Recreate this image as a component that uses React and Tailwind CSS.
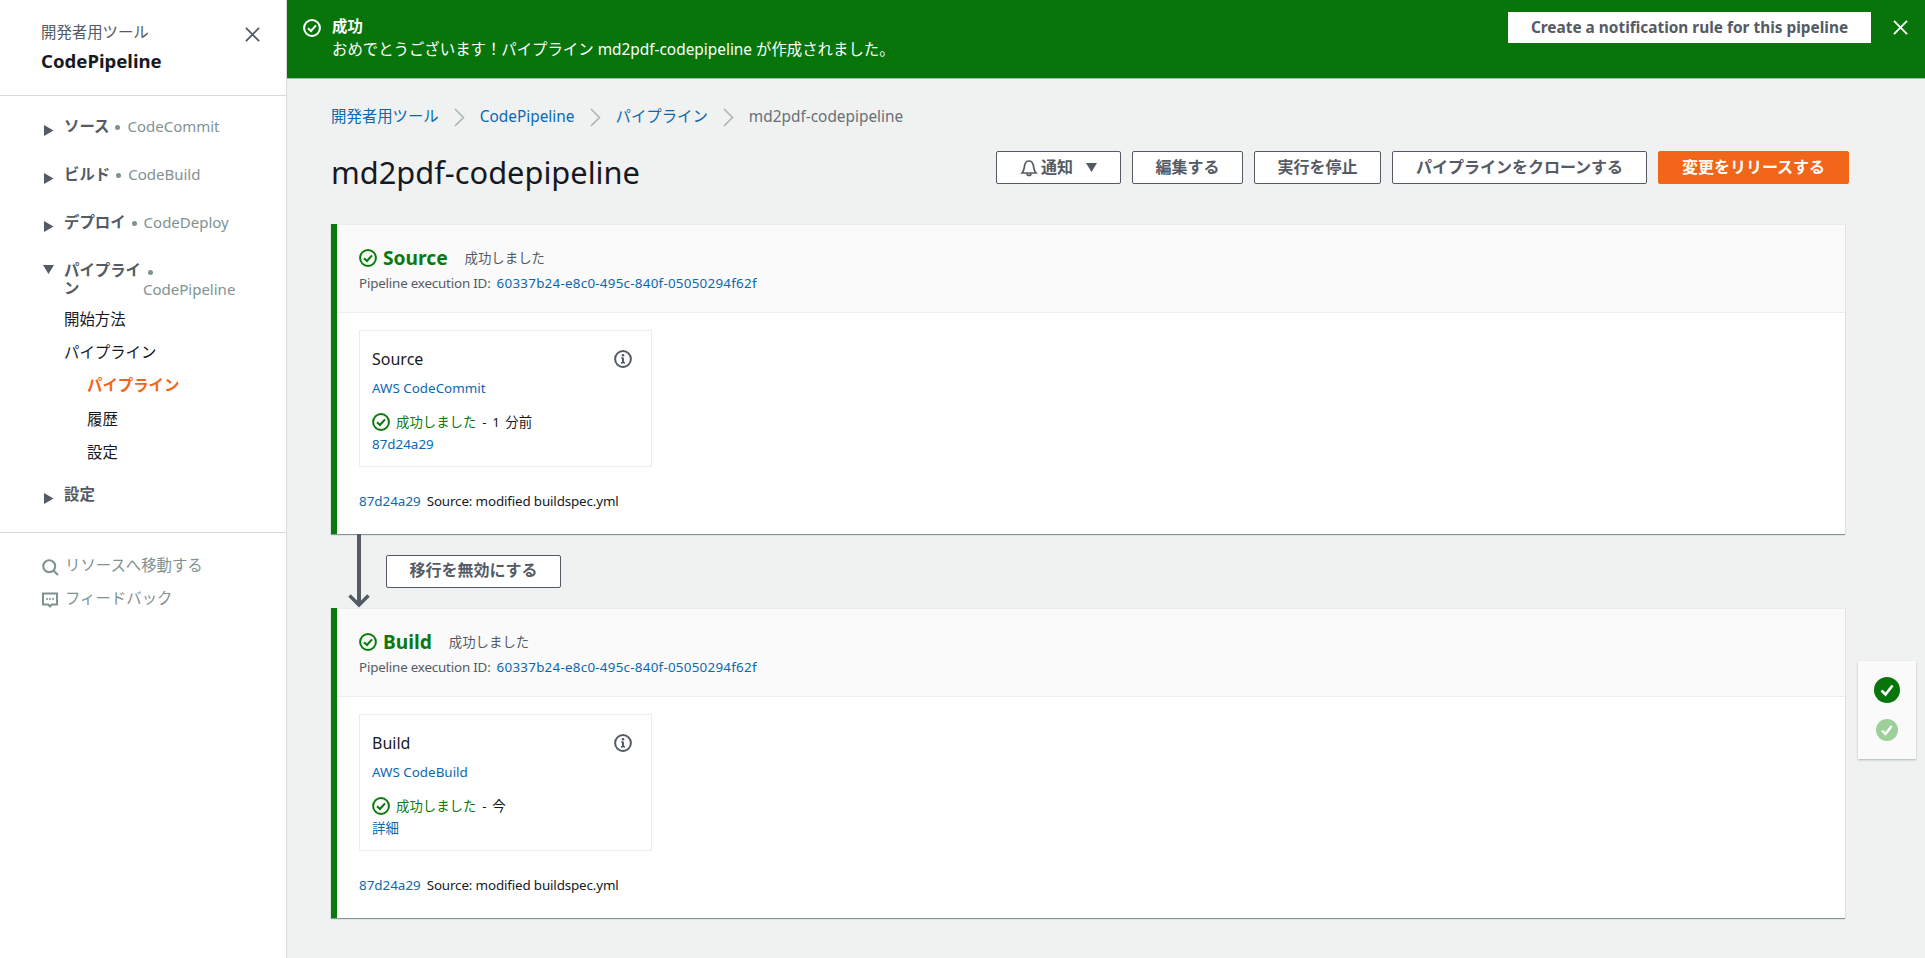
import React from "react";

const sans = '"Noto Sans","Noto Sans CJK JP",sans-serif';

function CheckCircle({ className }) {
  return (
    <svg viewBox="0 0 18 18" className={className} fill="none" stroke="currentColor">
      <circle cx="9" cy="9" r="7.9" strokeWidth="2" />
      <path d="M5 9.2 8 12l5-5.6" strokeWidth="2.1" />
    </svg>
  );
}

function Close({ className }) {
  return (
    <svg viewBox="0 0 16 16" className={className} fill="none" stroke="currentColor" strokeWidth="2">
      <path d="M1 1l14 14M15 1 1 15" />
    </svg>
  );
}

function Tri({ open }) {
  return (
    <svg viewBox="0 0 11 11" className="w-[11px] h-[11px] text-[#545b64] shrink-0" fill="currentColor">
      {open ? <path d="M0 1h11L5.5 10z" /> : <path d="M1 0l9.5 5.5L1 11z" />}
    </svg>
  );
}

function Dot({ className = "" }) {
  return <span className={`inline-block w-[5px] h-[5px] rounded-full bg-[#7f9291] align-[2px] ${className}`} />;
}

function NavHead({ label, sub, className = "" }) {
  return (
    <div className={`flex items-start text-[15.4px] leading-[18px] pl-[43px] ${className}`}>
      <span className="mt-[7px] w-[21px]"><Tri /></span>
      <span className="font-bold text-[#545b64]">{label}</span>
      {sub && (
        <span className="text-[#7f9291] text-[15px] ml-[6px] -mt-[1px]">
          <Dot className="mr-[7px]" />
          {sub}
        </span>
      )}
    </div>
  );
}

function Crumb({ children }) {
  return <a className="text-[#0b68b3]">{children}</a>;
}

function Chevron() {
  return (
    <svg viewBox="0 0 11 19" className="w-[11px] h-[19px] mx-[15px] text-[#aab7b8]" fill="none" stroke="currentColor" strokeWidth="1.6">
      <path d="M1 1l8.5 8.5L1 18" />
    </svg>
  );
}

function Btn({ className = "", children }) {
  return (
    <button className={`h-[33px] pb-[2px] flex items-center justify-center bg-white border border-[#545b64] rounded-[2px] text-[#545b64] font-bold text-[16px] ${className}`}>
      {children}
    </button>
  );
}

function Stage({ name, gap, provider, time, linkText }) {
  return (
    <section className="w-[1514px] h-[310px] bg-white border-l-[6px] border-[#0a7a0c] shadow-[0_1px_1px_0_#879596] flex flex-col">
      <header className="h-[89px] bg-[#fafafa] border-b border-t border-[#eaeded] pl-[22px] pt-[20px]">
        <div className="flex items-center h-[26px]">
          <CheckCircle className="w-[18px] h-[18px] text-[#0a7a0c]" />
          <span className="ml-[6px] text-[19.2px] font-bold text-[#0a7a0c]">{name}</span>
          <span className={`text-[13.4px] text-[#545b64] ${gap}`}>成功しました</span>
        </div>
        <div className="flex text-[13.4px] leading-[20px] mt-[2px]">
          <span className="text-[#545b64] tracking-[-0.2px]">Pipeline execution ID:</span>
          <a className="text-[#0b68b3] ml-[6px] tracking-[0.25px]">60337b24-e8c0-495c-840f-05050294f62f</a>
        </div>
      </header>
      <div className="pl-[22px] pt-[17px]">
        <div className="w-[293px] h-[137px] border border-[#eaeded] px-[12px] pt-[15px]">
          <div className="flex items-center justify-between h-[26px] pr-[7px]">
            <span className="text-[16px] text-[#16191f]">{name}</span>
            <svg viewBox="0 0 18 18" className="w-[18px] h-[18px] text-[#545b64]" fill="none" stroke="currentColor">
              <circle cx="9" cy="9" r="7.9" strokeWidth="2" />
              <path d="M9 7.8v5" strokeWidth="2" />
              <path d="M7.2 8H9M7 12.8h4" strokeWidth="1.5" />
              <circle cx="9" cy="5.3" r="1.3" fill="currentColor" stroke="none" />
            </svg>
          </div>
          <a className="block mt-[6px] text-[13.4px] leading-[20px] text-[#0b68b3]">{provider}</a>
          <div className="flex items-center mt-[13px] h-[22px] text-[13.4px]">
            <CheckCircle className="w-[18px] h-[18px] text-[#0a7a0c]" />
            <span className="ml-[6px] text-[#0a7a0c]">成功しました</span>
            <span className="ml-[6px] text-[#16191f] [word-spacing:2px]">- {time}</span>
          </div>
          <a className="block text-[13.4px] leading-[20px] mt-[1px] text-[#0b68b3]">{linkText}</a>
        </div>
        <div className="flex mt-[24px] text-[13.4px] leading-[20px]">
          <a className="text-[#0b68b3]">87d24a29</a>
          <span className="ml-[6px] text-[#16191f] tracking-[-0.15px]">Source: modified buildspec.yml</span>
        </div>
      </div>
    </section>
  );
}

export default function App() {
  return (
    <div className="relative flex h-[958px] w-[1925px] overflow-hidden bg-[#f0f2f2]" style={{ fontFamily: sans }}>
      <aside className="w-[287px] shrink-0 bg-white border-r border-[#d5dbdb] flex flex-col">
        <div className="h-[96px] border-b border-[#d5dbdb] pl-[41px] pt-[21px] relative">
          <div className="text-[15.4px] leading-[24px] text-[#545b64]">開発者用ツール</div>
          <div className="text-[18.6px] leading-[28px] mt-[2px] font-bold text-[#16191f]">CodePipeline</div>
          <Close className="absolute left-[245px] top-[27px] w-[15px] h-[15px] text-[#545b64]" />
        </div>
        <nav className="h-[437px] border-b border-[#d5dbdb] pt-[22px]">
          <NavHead label="ソース" sub="CodeCommit" />
          <NavHead label="ビルド" sub="CodeBuild" className="mt-[30px]" />
          <NavHead label="デプロイ" sub="CodeDeploy" className="mt-[30px]" />
          <div className="flex items-start text-[15.4px] leading-[18px] pl-[43px] mt-[30px]">
            <span className="mt-[2px] w-[21px]"><Tri open /></span>
            <span className="font-bold text-[#545b64] w-[79px]">パイプライン</span>
            <span className="text-[#7f9291] text-[15px] w-[95px]">
              <Dot className="ml-[5px]" /> CodePipeline
            </span>
          </div>
          <div className="pl-[64px] text-[15.4px] leading-[18px] text-[#16191f]">
            <div className="mt-[13px]">開始方法</div>
            <div className="mt-[15px]">パイプライン</div>
            <div className="mt-[15px] pl-[23px] font-bold text-[#f26619]">パイプライン</div>
            <div className="mt-[16px] pl-[23px]">履歴</div>
            <div className="mt-[15px] pl-[23px]">設定</div>
          </div>
          <NavHead label="設定" className="mt-[24px]" />
        </nav>
        <div className="pl-[42px] pt-[23px] text-[15.4px] text-[#7f9291]">
          <div className="flex items-center h-[20px]">
            <svg viewBox="0 0 16 16" className="w-[17px] h-[17px] mt-[3px]" fill="none" stroke="currentColor" strokeWidth="2">
              <circle cx="6.8" cy="6.8" r="5.6" />
              <path d="M11 11l4 4" />
            </svg>
            <span className="ml-[6px]">リソースへ移動する</span>
          </div>
          <div className="flex items-center h-[20px] mt-[13px]">
            <svg viewBox="0 0 16 16" className="w-[16px] h-[16px] mt-[1px]" fill="none" stroke="currentColor" strokeWidth="2">
              <path d="M1 1.5h14v11H9.8L8 14.5l-1.8-2H1z" />
              <path d="M4 7h2M7 7h2M10 7h2" strokeWidth="1.6" />
            </svg>
            <span className="ml-[7px]">フィードバック</span>
          </div>
        </div>
      </aside>

      <main className="flex-1 min-w-0">
        <div className="h-[79px] bg-[#08750b] border-b border-[#aab7b8] text-white flex">
          <CheckCircle className="w-[18px] h-[18px] ml-[16px] mt-[19px] shrink-0" />
          <div className="ml-[11px] mt-[15px] text-[15.4px] leading-[23px] flex-1">
            <div className="font-bold">成功</div>
            <div>おめでとうございます！パイプライン md2pdf-codepipeline が作成されました。</div>
          </div>
          <button className="w-[363px] h-[31px] mt-[12px] bg-white text-[#545b64] font-bold text-[15.4px]">
            Create a notification rule for this pipeline
          </button>
          <Close className="w-[15px] h-[15px] ml-[22px] mr-[17px] mt-[20px] shrink-0" />
        </div>

        <div className="pl-[44px] pr-[76px]">
          <div className="flex items-center h-[24px] mt-[26px] text-[15.4px]">
            <Crumb>開発者用ツール</Crumb>
            <Chevron />
            <Crumb>CodePipeline</Crumb>
            <Chevron />
            <Crumb>パイプライン</Crumb>
            <Chevron />
            <span className="text-[#687078]">md2pdf-codepipeline</span>
          </div>
          <div className="flex items-center justify-between mt-[13px] h-[60px]">
            <h1 className="text-[30.8px] text-[#16191f]">md2pdf-codepipeline</h1>
            <div className="flex gap-[11px] -mt-[9px]">
              <Btn className="w-[125px]">
                <svg viewBox="0 0 18 18" className="w-[18px] h-[18px] mr-[3px] mt-[2px]" fill="none" stroke="currentColor" strokeWidth="1.7">
                  <path d="M2 14c2-2 2-4 2.5-7C5 4 7 2 9 2s4 2 4.5 5c.5 3 .5 5 2.5 7z" />
                  <path d="M7 14.5a2 2 0 0 0 4 0" />
                </svg>
                通知
                <svg viewBox="0 0 11 9" className="w-[11px] h-[9px] ml-[13px] mt-[2px]" fill="currentColor"><path d="M0 0h11L5.5 9z" /></svg>
              </Btn>
              <Btn className="w-[111px]">編集する</Btn>
              <Btn className="w-[127px]">実行を停止</Btn>
              <Btn className="w-[255px]">パイプラインをクローンする</Btn>
              <Btn className="w-[191px] !bg-[#f26619] !border-[#f26619] !text-white">変更をリリースする</Btn>
            </div>
          </div>

          <div className="mt-[22px]">
            <Stage name="Source" gap="ml-[17px]" provider="AWS CodeCommit" time="1 分前" linkText="87d24a29" />
            <div className="flex items-center h-[74px] pl-[17px]">
              <svg viewBox="0 0 22 74" className="w-[22px] h-[74px] text-[#545b64]" fill="none" stroke="currentColor" strokeWidth="4">
                <path d="M11 0v70" />
                <path d="M1.5 61.5 11 71l9.5-9.5" strokeWidth="3.5" />
              </svg>
              <Btn className="w-[175px] ml-[16px]">移行を無効にする</Btn>
            </div>
            <Stage name="Build" gap="ml-[17px]" provider="AWS CodeBuild" time="今" linkText="詳細" />
          </div>
        </div>
      </main>

      <div className="absolute left-[1858px] top-[661px] w-[58px] h-[98px] bg-[#fafafa] shadow-[0_1px_2px_0_#aab7b8] flex flex-col items-center pt-[16px]">
        <svg viewBox="0 0 26 26" className="w-[26px] h-[26px]" fill="none">
          <circle cx="13" cy="13" r="13" fill="#08750b" />
          <path d="M7.5 13.5l4 4 7-9" stroke="#fff" strokeWidth="2.6" />
        </svg>
        <svg viewBox="0 0 22 22" className="w-[22px] h-[22px] mt-[16px]" fill="none">
          <circle cx="11" cy="11" r="11" fill="#9ccf9a" />
          <path d="M6 11.5l3.5 3.5 6.2-8" stroke="#fff" strokeWidth="2.4" />
        </svg>
      </div>
    </div>
  );
}
